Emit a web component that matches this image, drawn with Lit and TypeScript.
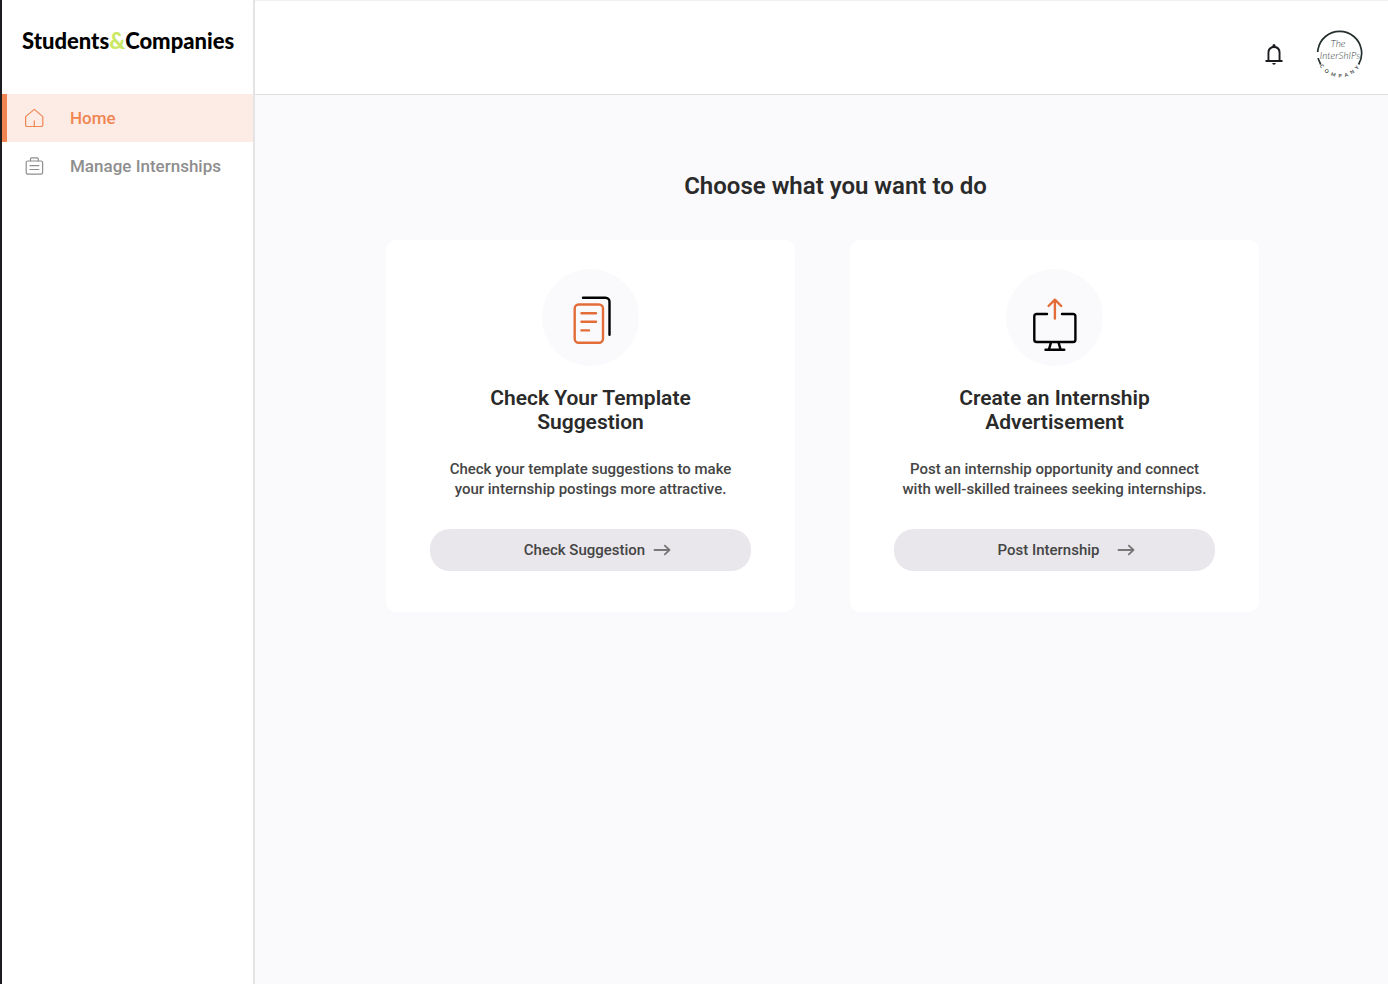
import { LitElement, html, css, svg } from "lit";
import { customElement, property } from "lit/decorators.js";

const homeIcon = svg`
  <path d="M1.6 8.6 10.300 1.4l8.500 7.200v8.300a1.600 1.600 0 0 1-1.600 1.600H3.200a1.600 1.600 0 0 1-1.600-1.600z" />
  <path d="M10.300 18.300v-5.400" />`;

const caseIcon = svg`
  <rect x="2.200" y="5" width="16.400" height="13.200" rx="1.600" />
  <path d="M6.500 5V2.900a1 1 0 0 1 1-1h5.800a1 1 0 0 1 1 1V5M6 9.600h8.800M6 13.500h8.800" />`;

const documentArt = svg`
  <g fill="none" stroke-width="2.4" stroke-linecap="round" stroke-linejoin="round">
    <path stroke="#000" d="M41 28.700h22.500a4 4 0 0 1 4 4v33" />
    <rect stroke="#e26d38" x="32.700" y="35.500" width="28.300" height="38.300" rx="4" />
    <path stroke="#e26d38" d="M39.500 44.200H54M39.500 52.800H54M39.500 61.400h7.500" />
  </g>`;

const uploadArt = svg`
  <g fill="none" stroke-width="2.4" stroke-linecap="round" stroke-linejoin="round">
    <path stroke="#000" d="M41 45H30.500a2.200 2.200 0 0 0-2.200 2.200v23.600a2.200 2.200 0 0 0 2.200 2.200h36.700a2.200 2.200 0 0 0 2.200-2.200V47.200a2.200 2.200 0 0 0-2.200-2.200H56M45 73.400l-2 7M52.500 73.400l2 7M39.500 80.700h18.800" />
    <path stroke="#e26d38" d="M48.900 49.500V31M42.600 37l6.300-6.300 6.300 6.300" />
  </g>`;

@customElement("action-card")
export class ActionCard extends LitElement {
  @property() heading = "";
  @property() text = "";
  @property() action = "";
  @property() art = "document";

  static styles = css`
    :host {
      display: block;
      flex: 0 1 409px;
    }
    .card {
      display: flex;
      flex-direction: column;
      align-items: center;
      padding: 29px 44px 41px;
      background: #fff;
      border-radius: 10px;
      text-align: center;
    }
    .art {
      width: 97px;
      height: 97px;
      background: #fafafc;
      border-radius: 50%;
    }
    .title {
      max-width: 240px;
      margin: 20px 0 0;
      font-size: 21px;
      line-height: 24px;
      font-weight: 600;
      color: #2a2a2a;
    }
    .text {
      max-width: 320px;
      margin: 25px 0 0;
      font-size: 15px;
      line-height: 20px;
      font-weight: 500;
      color: #454545;
      text-wrap: balance;
    }
    .button {
      display: flex;
      align-items: center;
      justify-content: center;
      gap: 8px;
      width: 100%;
      height: 42px;
      margin-top: 30px;
      padding: 0 0 0 14px;
      border: 0;
      border-radius: 20px;
      background: #e9e7ec;
      color: #454545;
      font: inherit;
      font-size: 15px;
      font-weight: 500;
      cursor: pointer;
    }
    .label {
      min-width: 120px;
    }
    .arrow {
      fill: none;
      stroke: #777;
      stroke-width: 1.8;
      stroke-linecap: round;
      stroke-linejoin: round;
    }
  `;

  render() {
    return html`
      <article class="card">
        <svg class="art" viewBox="0 0 97 97" aria-hidden="true">
          ${this.art === "upload" ? uploadArt : documentArt}
        </svg>
        <h2 class="title">${this.heading}</h2>
        <p class="text">${this.text}</p>
        <button class="button" type="button">
          <span class="label">${this.action}</span>
          <svg class="arrow" width="18" height="12" viewBox="0 0 18 12" aria-hidden="true">
            <path d="M1.500 6h15M11.800 1.700 16.500 6l-4.700 4.300" />
          </svg>
        </button>
      </article>
    `;
  }
}

@customElement("app-root")
export class AppRoot extends LitElement {
  static styles = css`
    :host {
      display: grid;
      grid-template-columns: 255px minmax(0, 1fr);
      min-height: 100vh;
      box-sizing: border-box;
      font-family: Roboto, sans-serif;
      background: #fafafc;
    }
    .sidebar {
      background: #fff;
      border-left: 2px solid #1c1b1f;
      border-right: 2px solid #e4e4e6;
    }
    .brand {
      display: flex;
      align-items: center;
      height: 80px;
      margin-bottom: 14px;
      padding-left: 20px;
      font-family: Lato, sans-serif;
      font-size: 22px;
      font-weight: 900;
      color: #000;
      text-decoration: none;
    }
    .amp {
      color: #cbe766;
    }
    .link {
      display: flex;
      align-items: center;
      gap: 26px;
      height: 48px;
      padding-left: 17px;
      border-left: 5px solid transparent;
      color: #8e8e8e;
      font-size: 17px;
      font-weight: 500;
      text-decoration: none;
    }
    .link.active {
      color: #f08552;
      background: #fcece5;
      border-left-color: #f08552;
    }
    .icon {
      width: 20px;
      height: 20px;
      fill: none;
      stroke: currentColor;
      stroke-width: 1.2;
      stroke-linecap: round;
      stroke-linejoin: round;
    }
    .topbar {
      display: flex;
      align-items: center;
      justify-content: flex-end;
      gap: 30px;
      box-sizing: border-box;
      height: 95px;
      padding: 12px 24px 0 0;
      background: #fff;
      border-top: 1px solid #efefef;
      border-bottom: 1px solid #e0e0e2;
    }
    .round {
      display: block;
      padding: 0;
      border: 0;
      background: none;
      cursor: pointer;
    }
    .round svg {
      display: block;
    }
    .script {
      font-family: Lato, sans-serif;
      font-style: italic;
      font-weight: 300;
      font-size: 10px;
      fill: #3c4444;
    }
    .arc {
      font-family: Lato, sans-serif;
      font-weight: 700;
      font-size: 5px;
      fill: #3c4444;
    }
    .content {
      padding: 77px 24px 40px 26px;
    }
    .heading {
      margin: 0;
      padding-left: 26px;
      font-size: 24px;
      line-height: 28px;
      font-weight: 600;
      text-align: center;
      color: #2a2a2a;
    }
    .cards {
      display: flex;
      justify-content: center;
      gap: 55px;
      margin-top: 40px;
    }
  `;

  render() {
    return html`
      <aside class="sidebar">
        <a class="brand" href="#"><span>Students<span class="amp">&amp;</span>Companies</span></a>
        <nav>
          <a class="link active" href="#home" aria-current="page">
            <svg class="icon" viewBox="0 0 20 20" aria-hidden="true">${homeIcon}</svg>
            Home
          </a>
          <a class="link" href="#internships">
            <svg class="icon" viewBox="0 0 20 20" aria-hidden="true">${caseIcon}</svg>
            Manage Internships
          </a>
        </nav>
      </aside>
      <div>
        <header class="topbar">
          <button class="round" type="button" aria-label="Notifications">
            <svg width="24" height="24" viewBox="0 0 24 24">
              <path
                fill="#1c1b1f"
                d="M3.500 20v-1.900h2V10.500a6.600 6.600 0 0 1 5-6.400V3.500a1.500 1.500 0 0 1 3 0v.6a6.600 6.600 0 0 1 5 6.400v7.600h2V20zM7.400 18.100h9.200v-7.600a4.600 4.600 0 0 0-9.200 0zM10.200 21h3.600a1.800 1.800 0 0 1-3.600 0z"
              />
            </svg>
          </button>
          <button class="round" type="button" aria-label="Account">
            <svg width="48" height="48" viewBox="0 0 48 48">
              <path fill="none" stroke="#263030" stroke-width="1.700" d="M4.700 34.500a22 22 0 1 1 37.900 0" />
              <rect x="0" y="22" width="4" height="6" fill="#fff" />
              <text class="script" x="22" y="17" text-anchor="middle">The</text>
              <text class="script" x="24" y="29" text-anchor="middle">InterShIPs</text>
              <path id="arc" fill="none" d="M3.500 35.500a23.500 23.500 0 0 0 41 0" />
              <text class="arc" text-anchor="middle">
                <textPath href="#arc" startOffset="48%">C&nbsp;&nbsp;&nbsp;O&nbsp;&nbsp;&nbsp;M&nbsp;&nbsp;&nbsp;P&nbsp;&nbsp;&nbsp;A&nbsp;&nbsp;&nbsp;N&nbsp;&nbsp;&nbsp;Y</textPath>
              </text>
            </svg>
          </button>
        </header>
        <main class="content">
          <h1 class="heading">Choose what you want to do</h1>
          <div class="cards">
            <action-card
              heading="Check Your Template Suggestion"
              text="Check your template suggestions to make your internship postings more attractive."
              action="Check Suggestion"
              art="document"
            ></action-card>
            <action-card
              heading="Create an Internship Advertisement"
              text="Post an internship opportunity and connect with well-skilled trainees seeking internships."
              action="Post Internship"
              art="upload"
            ></action-card>
          </div>
        </main>
      </div>
    `;
  }
}
